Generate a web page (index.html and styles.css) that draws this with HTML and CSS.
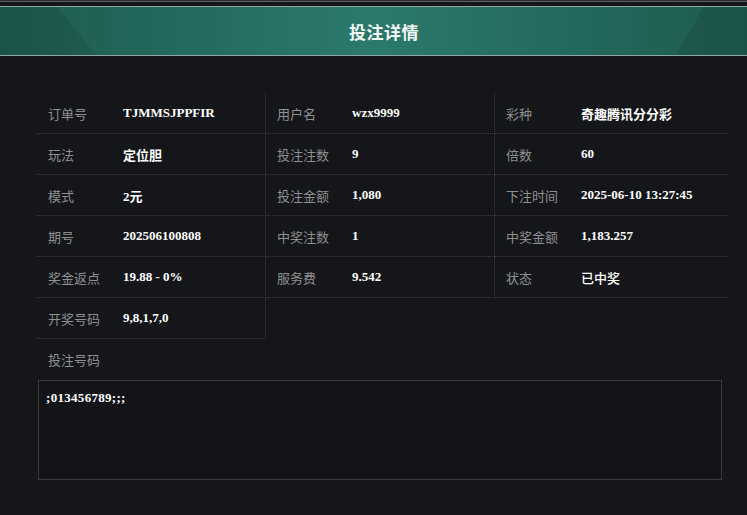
FILE: index.html
```html
<!DOCTYPE html>
<html lang="zh">
<head>
<meta charset="utf-8">
<title>投注详情</title>
<link rel="stylesheet" href="styles.css">
</head>
<body>
<div class="topline"></div>
<header class="header"><h1 class="title">投注详情</h1></header>
<main class="content">
  <div class="grid">
    <div class="cell"><span class="label">订单号</span><span class="value">TJMMSJPPFIR</span></div>
    <div class="cell"><span class="label">用户名</span><span class="value">wzx9999</span></div>
    <div class="cell last"><span class="label">彩种</span><span class="value">奇趣腾讯分分彩</span></div>

    <div class="cell"><span class="label">玩法</span><span class="value">定位胆</span></div>
    <div class="cell"><span class="label">投注注数</span><span class="value">9</span></div>
    <div class="cell last"><span class="label">倍数</span><span class="value">60</span></div>

    <div class="cell"><span class="label">模式</span><span class="value">2元</span></div>
    <div class="cell"><span class="label">投注金额</span><span class="value">1,080</span></div>
    <div class="cell last"><span class="label">下注时间</span><span class="value">2025-06-10 13:27:45</span></div>

    <div class="cell"><span class="label">期号</span><span class="value">202506100808</span></div>
    <div class="cell"><span class="label">中奖注数</span><span class="value">1</span></div>
    <div class="cell last"><span class="label">中奖金额</span><span class="value">1,183.257</span></div>

    <div class="cell"><span class="label">奖金返点</span><span class="value">19.88 - 0%</span></div>
    <div class="cell"><span class="label">服务费</span><span class="value">9.542</span></div>
    <div class="cell last"><span class="label">状态</span><span class="value cjk">已中奖</span></div>

    <div class="cell"><span class="label">开奖号码</span><span class="value">9,8,1,7,0</span></div>
  </div>
  <div class="bet-label"><span class="label">投注号码</span></div>
  <div class="bet-box">;013456789;;;</div>
</main>
</body>
</html>
```
FILE: styles.css
```css
* { box-sizing: border-box; }
html, body { margin: 0; padding: 0; }
body {
  background: #141619;
  width: 747px;
  height: 515px;
  overflow: hidden;
  font-family: "Noto Sans CJK SC", "Noto Sans", sans-serif;
}
.topline {
  height: 6px;
  border-top: 1px solid #2b2d30;
  background: linear-gradient(#5c5f62 0, #5c5f62 1px, #141619 1px);
  background-size: 100% 2px;
  background-repeat: no-repeat;
}
.header {
  position: relative;
  height: 50px;
  border-top: 1px solid #8fa7a2;
  border-bottom: 1px solid #8fa7a2;
  background: linear-gradient(90deg, #1f5a50 0%, #246a5e 25%, #2a7a6b 50%, #246a5e 75%, #1f5a50 100%);
  display: flex;
  align-items: center;
  justify-content: center;
  padding-left: 21px;
  overflow: hidden;
}
.header::before,
.header::after {
  content: "";
  position: absolute;
  top: 0;
  bottom: 0;
  background: rgba(10, 30, 26, 0.12);
}
.header::before {
  left: 0;
  width: 96px;
  clip-path: polygon(0 0, 57px 0, 96px 100%, 0 100%);
}
.header::after {
  right: 0;
  width: 71px;
  clip-path: polygon(28px 0, 100% 0, 100% 100%, 0 100%);
}
.title {
  position: relative;
  z-index: 1;
  margin: 0;
  font-size: 17px;
  font-weight: bold;
  color: #f4f7f6;
  letter-spacing: 0.5px;
}
.content {
  padding: 37px 0 0 37px;
}
.grid {
  display: grid;
  grid-template-columns: 229px 229px 232px;
  width: 690px;
}
.cell {
  display: flex;
  align-items: center;
  height: 41px;
  padding-left: 11px;
  border-bottom: 1px dotted #3a3d41;
  border-right: 1px dotted #3a3d41;
}
.cell.last { border-right: none; }
.label {
  width: 75px;
  flex: none;
  font-size: 13px;
  color: #8e9092;
}
.value {
  font-family: "Liberation Serif", "Noto Sans CJK SC", serif;
  font-weight: bold;
  font-size: 13px;
  color: #ffffff;
  white-space: nowrap;
}
.value.cjk { font-weight: 500; font-family: "Noto Sans CJK SC", sans-serif; }
.bet-label {
  height: 41px;
  display: flex;
  align-items: center;
  padding-left: 11px;
}
.bet-box {
  margin-left: 1px;
  width: 684px;
  height: 100px;
  border: 1px solid #3a3c3f;
  background: #121418;
  padding: 9px 7px;
  font-family: "Liberation Serif", serif;
  font-weight: bold;
  font-size: 13px;
  letter-spacing: 0.3px;
  color: #ffffff;
}
```
